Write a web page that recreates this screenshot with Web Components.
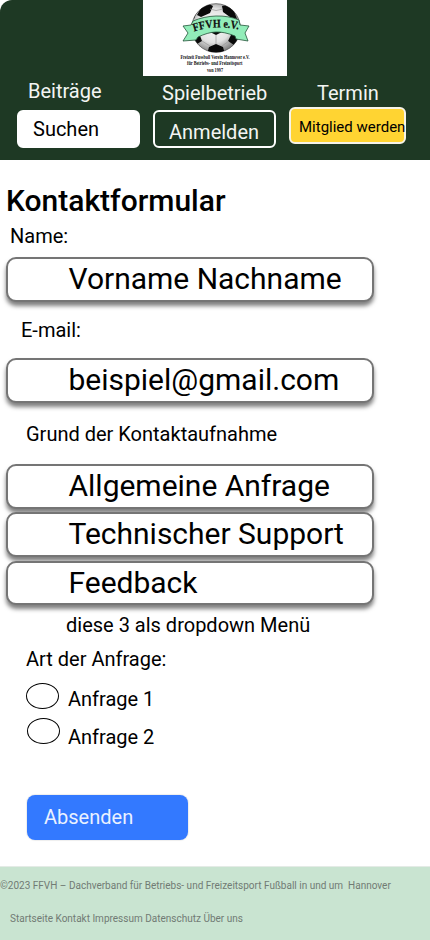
<!DOCTYPE html>
<html lang="de">
<head>
<meta charset="utf-8">
<title>Kontaktformular</title>
<style>
body { margin: 0; background: #fff; font-family: Roboto, "Liberation Sans", sans-serif; color: #000; }
</style>
</head>
<body>
<contact-page></contact-page>
<script>
const define = (name, html) => {
  const tpl = document.createElement('template');
  tpl.innerHTML = html;
  customElements.define(name, class extends HTMLElement {
    constructor() {
      super();
      this.attachShadow({ mode: 'open' }).append(tpl.content.cloneNode(true));
    }
  });
};

define('club-logo', `
<style>
:host { display: block; width: 143.5px; height: 75.5px; background: #fff; }
svg { display: block; }
text { font-family: "Liberation Serif", serif; font-weight: bold; fill: #111; }
</style>
<svg width="143.5" height="75.5" viewBox="0 0 143.5 75.5">
  <defs>
    <radialGradient id="g" cx=".45" cy=".45" r=".58">
      <stop offset="0" stop-color="#fff"/><stop offset=".6" stop-color="#e2e2e2"/><stop offset="1" stop-color="#777"/>
    </radialGradient>
    <clipPath id="c"><circle cx="73" cy="28" r="24.3"/></clipPath>
  </defs>
  <circle cx="73" cy="28" r="24.3" fill="url(#g)" stroke="#555" stroke-width=".8"/>
  <g clip-path="url(#c)">
    <path d="M58 8l8-4 4 2-3 7-9 4-4-2zM79 6l5-1 7 6 3 8-7-2-7-5zM50 12l4-1-3 8zM68 30h9l2 2-6 3-6-3zM49 32l7 1 3 8-5 3-7-6zM97 32l-8 1-4 8 6 4 7-7zM66 47l7-3 7 3 2 7H64z" fill="#0a0a0a"/>
    <path d="M67 9l6 1.500 7-1.500M73 35v9M59 41l8 5M86 41l-7 5M56 33l11-1M79 32l10 1" fill="none" stroke="#999" stroke-width=".7"/>
  </g>
  <path d="M40 26l8-1 2-4C64 15 82 14 96 20l1 5 9 1-4 7 3 8-12-2-1-3C77 30 68 31 55 37l-2 3-13 1 5-8z" fill="#92edb9" stroke="#24543a" stroke-width=".8"/>
  <path id="arc" d="M51 31.500Q72 24 97 30" fill="none"/>
  <text font-size="11.5" stroke="#111" stroke-width=".25"><textPath href="#arc" textLength="45" lengthAdjust="spacingAndGlyphs">FFVH e.V.</textPath></text>
  <text x="37.5" y="59.3" font-size="5.4" textLength="69" lengthAdjust="spacingAndGlyphs">Freizeit Fussball Verein Hannover e.V.</text>
  <text x="44" y="65.3" font-size="5.4" textLength="55.5" lengthAdjust="spacingAndGlyphs">für Betriebs- und Freizeitsport</text>
  <text x="64" y="72" font-size="5.4" textLength="16" lengthAdjust="spacingAndGlyphs">von 1997</text>
</svg>`);

define('nav-column', `
<style>
:host { display: flex; flex-direction: column; align-items: flex-start; box-sizing: border-box; font-size: 20px; line-height: 24px; white-space: nowrap; color: #fff; }
.label { padding-left: var(--label-x, 9px); margin-bottom: var(--label-gap, 5.5px); color: #f3f5f3; }
.button { box-sizing: border-box; width: 100%; height: var(--h, 38px); border: 2px solid var(--edge, #fff); border-radius: 6px; background: var(--fill, transparent); color: var(--ink, #f3f5f3); padding: var(--text-y, 7px) 0 0 var(--text-x, 14px); font-size: var(--size, 20px); }
</style>
<div class="label"><slot name="label"></slot></div>
<div class="button"><slot></slot></div>`);

define('site-header', `
<style>
:host { display: flex; flex-direction: column; align-items: center; height: 160.4px; background: #1e3924; border-top-left-radius: 12px; overflow: hidden; }
nav { align-self: stretch; display: grid; grid-template-columns: 123px 123px 117px; gap: 13px; padding-left: 17px; align-items: start; }
.a { padding-top: 3.5px; --label-x: 11px; --label-gap: 7px; --fill: #fff; --ink: #000; --text-y: 5px; }
.b { padding-top: 5.2px; --label-gap: 5.3px; --text-y: 8px; }
.c { padding-top: 5.2px; --label-x: 28px; --label-gap: 2.3px; --fill: #ffd432; --edge: #f6f3e8; --ink: #000; --size: 15px; --text-x: 8px; --text-y: 6px; --h: 37.4px; }
</style>
<club-logo></club-logo>
<nav>
  <nav-column class="a"><span slot="label">Beiträge</span>Suchen</nav-column>
  <nav-column class="b"><span slot="label">Spielbetrieb</span>Anmelden</nav-column>
  <nav-column class="c"><span slot="label">Termin</span>Mitglied werden</nav-column>
</nav>`);

define('form-label', `
<style>
:host { display: block; font-size: 20px; line-height: 24px; white-space: nowrap; }
</style><slot></slot>`);

define('form-field', `
<style>
:host { display: block; box-sizing: border-box; width: 368px; height: 44.7px; margin-left: 6px; padding: 0 0 0 60.5px; border: 2px solid #757575; border-radius: 10px; background: #fff; box-shadow: 0 4px 4px rgba(0,0,0,.5); font-size: 30px; line-height: 39px; letter-spacing: -.01px; white-space: nowrap; }
</style><slot></slot>`);

define('radio-option', `
<style>
:host { display: flex; align-items: flex-start; height: 35px; }
.ring { box-sizing: border-box; width: 33px; height: 26px; border: 1px solid #000; border-radius: 50%; flex: none; margin-right: var(--gap, 9px); }
.text { font-size: 20px; line-height: 24px; padding-top: var(--drop, 4px); white-space: nowrap; }
</style><span class="ring"></span><span class="text"><slot></slot></span>`);

define('submit-button', `
<style>
:host { display: block; box-sizing: border-box; width: 161px; height: 45px; border-radius: 8px; background: #3379ff; box-shadow: 0 0 1px 1px #eee; color: #eaf1ff; padding: 10px 0 0 17px; font-size: 20px; line-height: 24px; }
</style><slot></slot>`);

define('site-footer', `
<style>
:host { display: block; box-sizing: border-box; flex: none; height: 73.2px; padding-top: 12.8px; background: #c9e4d1; box-shadow: 0 -1px 0 #e4ebe6; color: #717b74; font-size: 10px; line-height: 12px; }
div { white-space: pre; }
.links { padding: 21.2px 0 0 10px; }
</style><div><slot name="copy"></slot></div><div class="links"><slot></slot></div>`);

define('contact-page', `
<style>
:host { display: flex; flex-direction: column; height: 940px; overflow: hidden; }
main { height: 706.4px; flex: none; }
h1 { margin: 0; padding: 22.6px 0 0 6px; font-size: 30px; line-height: 36px; font-weight: 500; }
</style>
<site-header></site-header>
<main>
  <h1>Kontaktformular</h1>
  <form-label style="margin:5px 0 0 10px">Name:</form-label>
  <form-field style="margin-top:9.4px">Vorname Nachname</form-field>
  <form-label style="margin:15.9px 0 0 21px">E-mail:</form-label>
  <form-field style="margin-top:16.3px">beispiel@gmail.com</form-field>
  <form-label style="margin:19px 0 0 26px">Grund der Kontaktaufnahme</form-label>
  <form-field style="margin-top:18px">Allgemeine Anfrage</form-field>
  <form-field style="margin-top:3.6px">Technischer Support</form-field>
  <form-field style="margin-top:3.7px">Feedback</form-field>
  <form-label style="margin:7.8px 0 0 66px">diese 3 als dropdown Menü</form-label>
  <form-label style="margin:10px 0 0 26px">Art der Anfrage:</form-label>
  <radio-option style="margin:12px 0 0 26px">Anfrage 1</radio-option>
  <radio-option style="margin-left:27px;--gap:8px;--drop:7px">Anfrage 2</radio-option>
  <submit-button style="margin:41.8px 0 0 27px">Absenden</submit-button>
</main>
<site-footer><span slot="copy">©2023 FFVH – Dachverband für Betriebs- und Freizeitsport Fußball in und um  Hannover</span>Startseite Kontakt Impressum Datenschutz Über uns</site-footer>`);
</script>
</body>
</html>
